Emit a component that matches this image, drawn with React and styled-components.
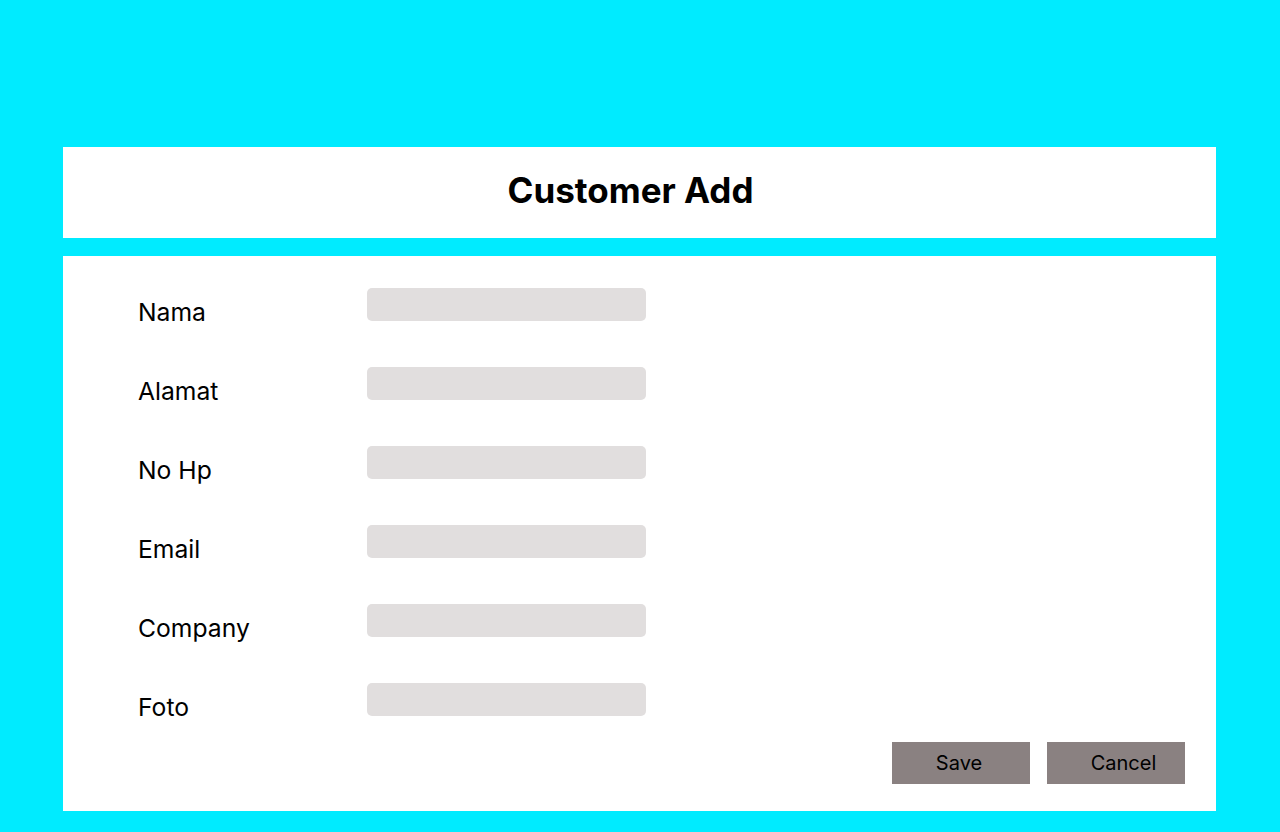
import styled, { createGlobalStyle } from 'styled-components';

const GlobalStyle = createGlobalStyle`
  html, body {
    margin: 0;
    padding: 0;
    background: #00ebff;
    font-family: Inter, "Noto Sans", sans-serif;
  }
`;

const fields = ['Nama', 'Alamat', 'No Hp', 'Email', 'Company', 'Foto'];

export default () => (
  <Page>
    <GlobalStyle />
    <Header>
      <Title>Customer Add</Title>
    </Header>
    <Card>
      <Form>
        {fields.map((f) => (
          <Row key={f}>
            <Label>{f}</Label>
            <Input type="text" />
          </Row>
        ))}
      </Form>
      <Actions>
        <Button>Save</Button>
        <Button indent>Cancel</Button>
      </Actions>
    </Card>
  </Page>
);

const Page = styled.div`
  height: 832px;
  box-sizing: border-box;
  padding: 147px 64px 21px 63px;
  display: flex;
  flex-direction: column;
  gap: 18px;
`;

const Header = styled.div`
  height: 91px;
  box-sizing: border-box;
  background: #ffffff;
  display: flex;
  align-items: center;
  justify-content: center;
  padding: 0 18px 5px 0;
`;

const Title = styled.h1`
  margin: 0;
  font-size: 35px;
  font-weight: 700;
  color: #000;
  line-height: 42px;
`;

const Card = styled.div`
  flex: 1;
  background: #ffffff;
  box-sizing: border-box;
  padding: 32px 31px 27px 75px;
  display: flex;
  flex-direction: column;
`;

const Form = styled.div`
  display: flex;
  flex-direction: column;
  gap: 40px;
`;

const Row = styled.div`
  display: flex;
  align-items: flex-start;
  height: 39px;
`;

const Label = styled.label`
  width: 229px;
  margin-top: 9px;
  font-size: 24.7px;
  line-height: 30px;
  color: #000;
`;

const Input = styled.input`
  width: 279px;
  height: 33px;
  box-sizing: border-box;
  border: none;
  border-radius: 5px;
  background: #e1dede;
  outline: none;
`;

const Actions = styled.div`
  margin-top: auto;
  display: flex;
  justify-content: flex-end;
  gap: 17px;
`;

const Button = styled.button`
  width: 138px;
  height: 42px;
  border: none;
  background: #8a8181;
  color: #000;
  font-family: Inter, sans-serif;
  font-size: 20px;
  padding: 0 ${(p) => (p.indent ? '0 0 15px' : '4px 0 0')};
  cursor: pointer;
`;
